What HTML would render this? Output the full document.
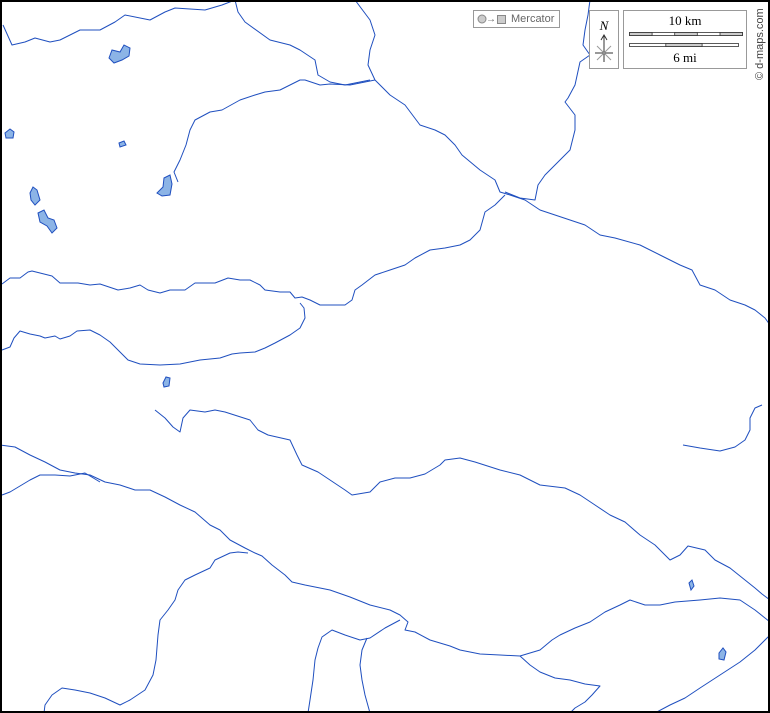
<!DOCTYPE html>
<html><head><meta charset="utf-8"><style>
html,body{margin:0;padding:0;background:#fff}
svg{display:block}
</style></head><body>
<svg width="770" height="713" viewBox="0 0 770 713" xmlns="http://www.w3.org/2000/svg">
<rect x="0" y="0" width="770" height="713" fill="#fff"/>
<g fill="none" stroke="#1f4fbf" stroke-width="1" stroke-linejoin="round">
<polyline points="3,25 12,45 25,42 35,38 50,42 60,40 80,30 100,30 115,22 125,15 150,20 165,12 175,8 205,10 222,5 235,0"/>
<polyline points="235,0 238,12 245,22 270,40 290,45 300,50 315,60 318,75 330,82 345,85 370,80"/>
<polyline points="355,0 370,20 375,35 370,50 368,65 375,80"/>
<polyline points="375,80 390,95 405,105 420,125 435,130 445,135 455,145 462,155 480,170 495,180 500,192 510,195 525,200 540,210 555,215 570,220 585,225 600,235 615,238 640,245 660,255 680,265 692,270 700,285 715,290 730,300 745,305 755,310 765,318 770,325"/>
<polyline points="590,0 588,15 585,30 583,45 590,55 580,62 575,85 568,98 565,102 575,115 575,130 570,150 558,162 545,175 538,185 535,200 520,198 505,192"/>
<polyline points="375,80 350,85 330,84 320,85 305,80 300,80 292,84 280,90 265,92 255,95 240,100 222,110 210,112 195,120 190,130 186,145 180,160 174,172 178,182"/>
<polyline points="505,195 495,205 485,212 480,230 470,240 460,245 445,248 430,250 415,258 405,265 390,270 375,275 362,285 355,290 352,300 345,305 330,305 320,305 310,300 302,297 295,298 290,292 280,292 265,290 260,285 250,280 240,280 228,278 215,283 205,283 195,283 185,290 175,290 170,290 160,293 148,290 140,285 130,288 118,290 100,284 90,285 78,283 60,283 52,276 32,271 28,272 20,278 10,278 2,284"/>
<polyline points="2,350 10,347 14,338 20,331 30,334 40,336 45,338 55,336 60,339 70,336 77,331 90,330 100,335 110,342 120,352 128,360 140,364 160,365 180,364 200,360 220,358 232,354 240,353 255,352 265,348 275,343 290,335 300,328 305,318 304,308 300,303"/>
<polyline points="155,410 165,418 173,427 180,432 183,418 190,410 205,412 215,410 225,412 250,420 258,430 268,435 290,440 297,455 302,465 318,472 330,480 345,490 352,495 370,492 380,482 395,478 410,478 425,474 440,465 445,460 460,458 475,462 500,470 520,475 540,485 565,488 580,495 595,505 610,515 625,522 640,535 655,545 670,560 680,555 688,546 705,550 715,560 730,568 745,580 755,588 762,594 770,600"/>
<polyline points="0,445 15,447 30,455 45,462 60,470 75,473 90,475 105,482 120,485 135,490 150,490 165,497 180,505 195,512 210,525 220,530 230,540 245,548 255,553 262,556 272,565 285,575 292,582 305,585 330,590 350,597 370,605 390,610 400,615 408,622 405,630 415,632 430,640 450,646 460,650 480,654 500,655 520,656 540,650 552,640 560,635 575,628 590,622 605,612 620,605 630,600 645,605 660,605 675,602 700,600 720,598 740,600 755,610 765,618 770,622"/>
<polyline points="2,495 10,492 20,486 30,480 40,475 55,475 70,476 85,473 100,482"/>
<polyline points="248,553 238,552 230,553 215,560 210,568 195,575 185,580 178,590 175,600 168,610 160,620 158,635 156,660 153,675 145,690 130,700 120,705 105,698 90,693 75,690 62,688 52,695 45,705 44,713"/>
<polyline points="400,620 385,628 370,638 360,640 345,635 332,630 322,637 318,648 315,660 313,680 310,700 308,713"/>
<polyline points="367,638 362,650 360,665 362,680 365,695 370,713"/>
<polyline points="520,656 530,665 540,672 555,678 570,680 585,684 600,686 592,695 585,702 575,708 570,713"/>
<polyline points="683,445 700,448 720,451 735,447 745,440 750,430 750,418 755,408 762,405"/>
<polyline points="770,635 755,650 740,662 720,675 700,688 685,698 670,705 655,713"/>
</g>
<g fill="#8cb4e6" stroke="#1f4fbf" stroke-width="1">
<path d="M109,58 L112,50 L120,52 L124,45 L130,48 L129,56 L122,60 L114,63 Z"/>
<path d="M5,133 L10,129 L14,132 L13,138 L6,138 Z"/>
<path d="M119,143 L124,141 L126,145 L120,147 Z"/>
<path d="M157,193 L163,187 L164,178 L170,175 L172,184 L170,195 L162,196 Z"/>
<path d="M30,193 L33,187 L37,190 L40,200 L35,205 L31,200 Z"/>
<path d="M38,213 L44,210 L48,218 L54,220 L57,228 L52,233 L47,226 L40,222 Z"/>
<path d="M163,383 L166,377 L170,378 L169,386 L164,387 Z"/>
<path d="M689,583 L692,580 L694,586 L691,590 Z"/>
<path d="M719,653 L723,648 L726,652 L724,660 L719,659 Z"/>
</g>
<g font-family="Liberation Sans, sans-serif">
<rect x="473.5" y="10.5" width="86" height="17" fill="#fff" stroke="#999"/>
<circle cx="482" cy="19" r="4" fill="#ccc" stroke="#888"/>
<text x="486" y="22" font-size="10" fill="#666">→</text>
<rect x="497.5" y="15.5" width="8" height="8" fill="#ccc" stroke="#888"/>
<text x="511" y="22" font-size="11" fill="#666">Mercator</text>
<rect x="589.5" y="10.5" width="29" height="58" fill="#fff" stroke="#999"/>
<text x="604" y="30" font-size="13" font-style="italic" font-family="Liberation Serif, serif" text-anchor="middle">N</text>
<line x1="604" y1="36" x2="604" y2="62" stroke="#333"/>
<path d="M601,40 L604,35 L607,40" fill="none" stroke="#333"/>
<line x1="595" y1="53" x2="613" y2="53" stroke="#333"/>
<line x1="597" y1="46" x2="611" y2="60" stroke="#999"/>
<line x1="611" y1="46" x2="597" y2="60" stroke="#999"/>
<rect x="623.5" y="10.5" width="123" height="58" fill="#fff" stroke="#999"/>
<text x="685" y="25" font-size="13" font-family="Liberation Serif, serif" text-anchor="middle">10 km</text>
<rect x="629.5" y="32.5" width="113" height="3" fill="#fff" stroke="#333" stroke-width="0.8"/>
<rect x="629.5" y="32.5" width="22.6" height="3" fill="#ccc" stroke="#333" stroke-width="0.8"/>
<rect x="674.7" y="32.5" width="22.6" height="3" fill="#ccc" stroke="#333" stroke-width="0.8"/>
<rect x="720" y="32.5" width="22.5" height="3" fill="#ccc" stroke="#333" stroke-width="0.8"/>
<rect x="629.5" y="43.5" width="109" height="3" fill="#fff" stroke="#333" stroke-width="0.8"/>
<rect x="665.8" y="43.5" width="36.3" height="3" fill="#ccc" stroke="#333" stroke-width="0.8"/>
<text x="685" y="62" font-size="13" font-family="Liberation Serif, serif" text-anchor="middle">6 mi</text>
<text x="0" y="0" font-size="11" fill="#444" transform="translate(763,80) rotate(-90)">© d-maps.com</text>
</g>
<rect x="1" y="1" width="768" height="711" fill="none" stroke="#000" stroke-width="2"/>
</svg>
</body></html>
